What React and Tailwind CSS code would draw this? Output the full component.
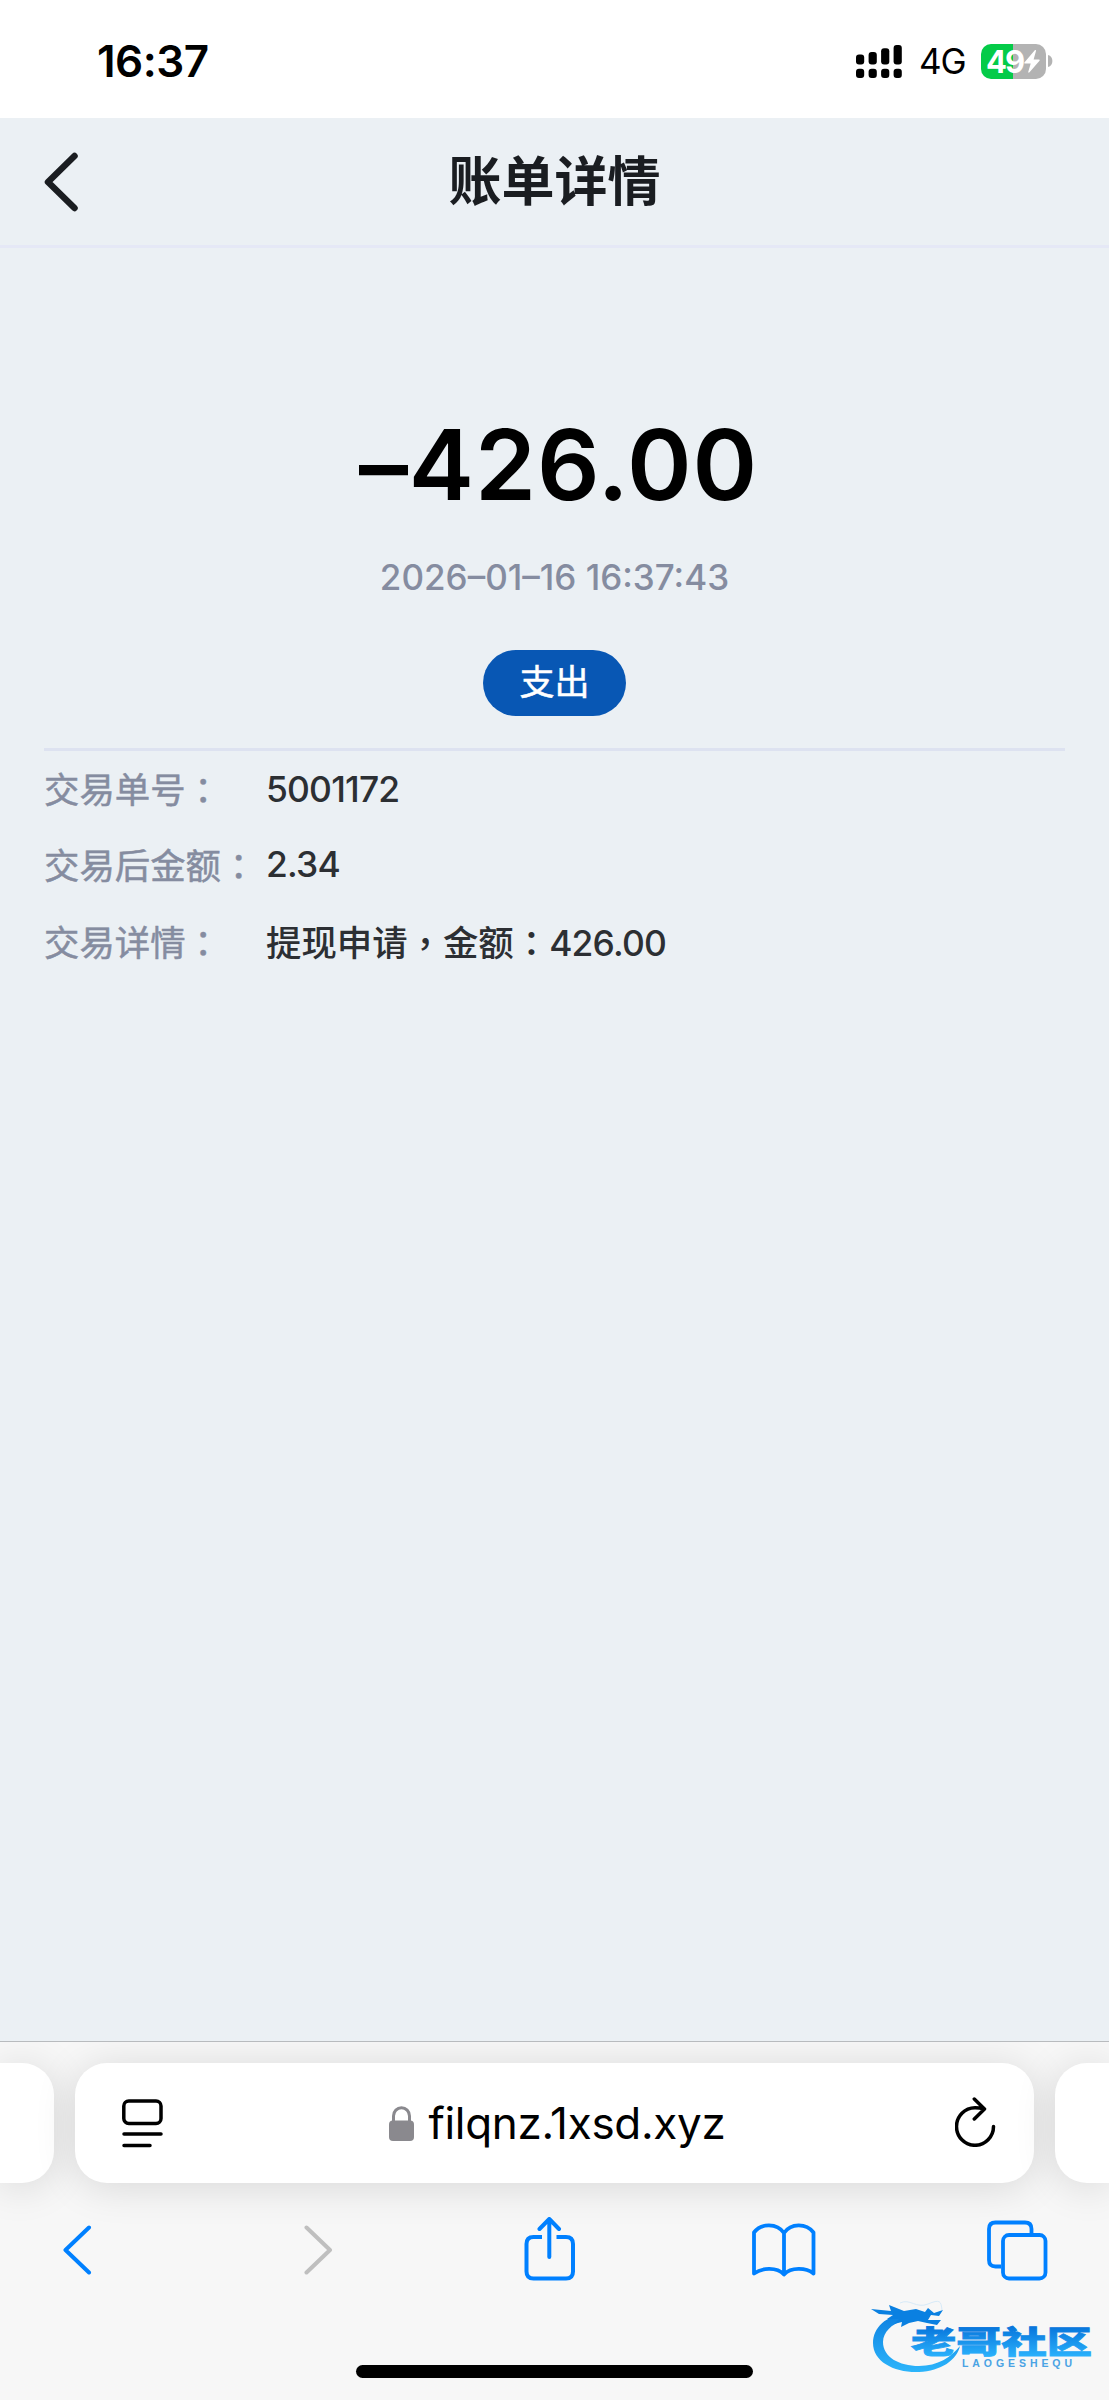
import React from 'react';

const details = [
  { label: '交易单号', value: '5001172', height: 'h-[76px]' },
  { label: '交易后金额', value: '2.34', height: 'h-[75px]' },
  { label: '交易详情', value: '提现申请，金额：426.00', height: 'h-[79px]' },
];

// Full-width punctuation sits in the middle of its cell, numbers are set a bit tighter
const MixedText = ({ text }) =>
  text.split(/([，：]|[\d.]+)/).map((part, i) => {
    if (part === '，' || part === '：') {
      return (
        <span key={i} lang="zh-Hant" className="relative top-px font-['Noto_Sans_CJK_TC',sans-serif]">
          {part}
        </span>
      );
    }
    if (/^[\d.]+$/.test(part)) {
      return (
        <span key={i} className="tracking-[-0.8px]">
          {part}
        </span>
      );
    }
    return part;
  });

const SignalIcon = () => (
  <svg className="w-[46px] h-[33px]" viewBox="0 0 46 33" fill="currentColor">
    <rect x="0" y="9.5" width="8.2" height="10" rx="3" />
    <rect x="12.6" y="7" width="8.2" height="12.5" rx="3" />
    <rect x="25.1" y="3.2" width="8.2" height="16.3" rx="3" />
    <rect x="37.6" y="0" width="8.2" height="19.5" rx="3" />
    <rect x="0" y="23.7" width="8.2" height="9.2" rx="3" />
    <rect x="12.6" y="23.7" width="8.2" height="9.2" rx="3" />
    <rect x="25.1" y="23.7" width="8.2" height="9.2" rx="3" />
    <rect x="37.6" y="23.7" width="8.2" height="9.2" rx="3" />
  </svg>
);

const Battery = () => (
  <div className="flex items-center">
    <div className="w-[65px] h-[35px] rounded-[10px] bg-[linear-gradient(to_right,#04cb48_48.5%,#b3b3b3_48.5%)] flex items-center pl-[5px] text-white">
      <span className="w-[38px] text-[31px] leading-[35px] font-bold tracking-[-2px]">49</span>
      <svg className="w-[16px] h-[23px] shrink-0" viewBox="0 0 16 23" fill="currentColor">
        <path d="M10.8 0.3 0.6 12.3c-.5.7-.3 1.200.5 1.200h5.600L4.300 21.700c-.3 1 .5 1.400 1.200.6L15.500 10.700c.5-.7.2-1.200-.5-1.200H9.600L12 1c.2-.9-.6-1.400-1.200-.7Z" />
      </svg>
    </div>
    <svg className="ml-[2px] w-[5px] h-[12px]" viewBox="0 0 5 12">
      <path d="M0 0c3 .8 4.400 3 4.400 6S3 11.200 0 12Z" fill="#b3b3b3" />
    </svg>
  </div>
);

const StatusBar = () => (
  <div className="h-[118px] bg-white flex items-start justify-between pl-[97px] pr-[56px] pt-[34px] text-black">
    <span className="text-[44px] leading-[54px] font-semibold tracking-[-0.5px]">16:37</span>
    <div className="flex items-center h-[54px]">
      <SignalIcon />
      <span className="ml-[17px] w-[48px] text-[35px] leading-[54px] tracking-[-1px]">4G</span>
      <div className="ml-[14px]">
        <Battery />
      </div>
    </div>
  </div>
);

const Header = () => (
  <header className="h-[130px] border-b-[3px] border-[#e5e8f6] flex items-center px-[44px]">
    <svg className="w-[35px] h-[60px]" viewBox="0 0 35 60" fill="none" stroke="#1a1d21" strokeWidth="6.500" strokeLinecap="round" strokeLinejoin="round">
      <path d="M30.500 4 4 30 30.500 56" />
    </svg>
    <h1 className="flex-1 pr-[35px] text-center text-[53px] leading-[80px] font-bold text-[#1a1d21]">账单详情</h1>
  </header>
);

const DetailRow = ({ label, value, height }) => (
  <div className={`flex items-center text-[35.400px] leading-[53px] ${height}`}>
    <span className="w-[222px] text-[#858ca0] whitespace-nowrap [-webkit-text-stroke:0.5px_#858ca0]">
      <MixedText text={`${label}：`} />
    </span>
    <span className="text-[#2c2f33] font-medium whitespace-nowrap">
      <MixedText text={value} />
    </span>
  </div>
);

const AddressBar = () => (
  <div className="flex h-[120px] gap-[21px]">
    <div className="w-[54px] rounded-r-[32px] bg-white shadow-[0_4px_40px_rgba(0,0,0,0.13)]" />
    <div className="flex-1 rounded-[32px] bg-white shadow-[0_4px_40px_rgba(0,0,0,0.13)] flex items-center justify-between pl-[47px] pr-[38px]">
      <svg className="w-[41px] h-[49px]" viewBox="0 0 41 49" fill="none" stroke="black" strokeWidth="3.500" strokeLinecap="round">
        <rect x="1.800" y="2" width="37.200" height="22.500" rx="5" />
        <path d="M2 35h37M2 46.500h26" />
      </svg>
      <div className="flex items-center gap-[14px] pr-[3px]">
        <svg className="w-[25px] h-[35px]" viewBox="0 0 25 35">
          <rect x="0" y="14.500" width="25" height="20.500" rx="4" fill="#8a898e" />
          <path d="M4.500 16V10a8 8.300 0 0 1 16 0v6" fill="none" stroke="#8a898e" strokeWidth="3" />
        </svg>
        <span className="text-[44px] leading-[60px] tracking-[-0.3px] text-black">filqnz.1xsd.xyz</span>
      </div>
      <svg className="-mt-[3px] w-[41px] h-[50px]" viewBox="0 0 41 50" fill="none" stroke="black" strokeWidth="3.500" strokeLinecap="round" strokeLinejoin="round">
        <path d="M38.500 29.500A18.500 18.800 0 1 1 20 10.700q4.500 0 9 1.200M19.300 2 29.500 12 19.300 22" />
      </svg>
    </div>
    <div className="w-[54px] rounded-l-[32px] bg-white shadow-[0_4px_40px_rgba(0,0,0,0.13)]" />
  </div>
);

const Toolbar = () => (
  <div className="flex items-center h-[134px] pl-[62px] text-[#0080ff]">
    <svg className="w-[30px] h-[50px]" viewBox="0 0 30 50" fill="none" stroke="currentColor" strokeWidth="4" strokeLinecap="round" strokeLinejoin="round">
      <path d="M27 2.500 3.500 25 27 47.500" />
    </svg>
    <svg className="ml-[211px] w-[30px] h-[50px]" viewBox="0 0 30 50" fill="none" stroke="#bfbfbf" strokeWidth="4" strokeLinecap="round" strokeLinejoin="round">
      <path d="M3.500 2.500 27 25 3.500 47.500" />
    </svg>
    <svg className="ml-[191px] -mt-[3px] w-[52px] h-[64px]" viewBox="0 0 52 64" fill="none" stroke="currentColor" strokeWidth="4" strokeLinecap="round" strokeLinejoin="round">
      <path strokeLinecap="butt" d="M18 20H9.500Q2.500 20 2.500 27V54.500Q2.500 61.500 9.500 61.500H42Q49 61.500 49 54.500V27Q49 20 42 20H32.500" />
      <path d="M25.300 40V2.500M15.500 12 25.300 2 35 12" />
    </svg>
    <svg className="ml-[176px] w-[64px] h-[54px]" viewBox="0 0 64 54" fill="none" stroke="currentColor" strokeWidth="3.800" strokeLinecap="round" strokeLinejoin="round">
      <path d="M32 51.500V10C25 0 9 0 2 9.500V50.500C10 44.500 25 44 32 51.500C39 44 54 44.500 61.500 50.500V9.500C54 0 39 0 32 10" />
    </svg>
    <svg className="ml-[171px] w-[61px] h-[61px]" viewBox="0 0 61 61" fill="none" stroke="currentColor" strokeWidth="3.800">
      <path d="M44.500 14V9Q44.500 2.500 38 2.500H8.500Q2 2.500 2 9V40Q2 46.500 8.500 46.500H14" />
      <rect x="16" y="15" width="42.500" height="43.500" rx="6" />
    </svg>
  </div>
);

// Community logo over the lower right corner
const Watermark = () => (
  <svg className="absolute left-[868px] top-[2296px] w-[228px] h-[82px]" viewBox="0 0 228 82">
    <defs>
      <linearGradient id="sea" gradientUnits="userSpaceOnUse" x1="0" y1="8" x2="0" y2="76">
        <stop offset="0" stopColor="#0877dc" />
        <stop offset="1" stopColor="#2cb5fb" />
      </linearGradient>
      <linearGradient id="ink" gradientUnits="userSpaceOnUse" x1="0" y1="31" x2="0" y2="60">
        <stop offset="0" stopColor="#0876dc" />
        <stop offset="1" stopColor="#29b0fb" />
      </linearGradient>
    </defs>
    <path d="M38 18C18 19 5 32 5 47C5 66 27 77 51 76C73 75 89 64 92 50C83 61 70 70 51 70C31 70 15 61 15 46C15 36 24 28 34 25Z" fill="url(#sea)" />
    <path d="M3 13 23 15 21 9 36 15 48 13 57 16 60 12 66 17 75 14 71 20 63 19 60 24 73 24 69 29 59 27 50 25 41 27 33 31 34 26 26 28 31 23 19 23 25 19 11 18Z" fill="#0a80e1" />
    <path d="M32 7C42 2 48 13 60 8S73 5 74 14" fill="none" stroke="#d7eaf7" strokeWidth="1" />
    <text x="43" y="57" textLength="181" lengthAdjust="spacingAndGlyphs" fontSize="30.500" fontWeight="900" fontFamily="'Noto Sans CJK SC', sans-serif" fill="url(#ink)" stroke="url(#ink)" strokeWidth="0.800">
      老哥社区
    </text>
    <text x="94" y="70.500" textLength="110" fontSize="10.500" fontWeight="700" fontFamily="'Liberation Sans', Arial, sans-serif" fill="#4aa3e4">
      LAOGESHEQU
    </text>
  </svg>
);

export default function App() {
  return (
    <div lang="zh-CN" className="relative w-[1109px] h-[2400px] overflow-hidden flex flex-col bg-[#ebf0f4] font-['Inter','Noto_Sans_CJK_SC',sans-serif]">
      <StatusBar />
      <Header />

      <main className="flex-1 px-[44px] pt-[156px]">
        <div className="flex flex-col items-center h-[344px]">
          <p className="pl-[8px] text-[98px] leading-[121px] font-semibold text-black tracking-[0.900px]">–426.00</p>
          <p className="mt-[26px] text-[35px] leading-[53px] font-medium text-[#858ca0]">2026–01–16 16:37:43</p>
          <span className="mt-[46px] w-[143px] h-[66px] rounded-full bg-[#0857b4] text-white text-[35px] leading-[64px] text-center [-webkit-text-stroke:0.5px_white]">支出</span>
        </div>
        <div className="border-t-[3px] border-[#dde2f0]">
          {details.map((item) => (
            <DetailRow key={item.label} {...item} />
          ))}
        </div>
      </main>

      <footer className="h-[359px] border-t border-[#b8bbbe] bg-[#f7f7f7] pt-[21px] overflow-hidden">
        <AddressBar />
        <Toolbar />
        <div className="mx-auto mt-[48px] w-[397px] h-[13px] rounded-full bg-black" />
      </footer>

      <Watermark />
    </div>
  );
}
